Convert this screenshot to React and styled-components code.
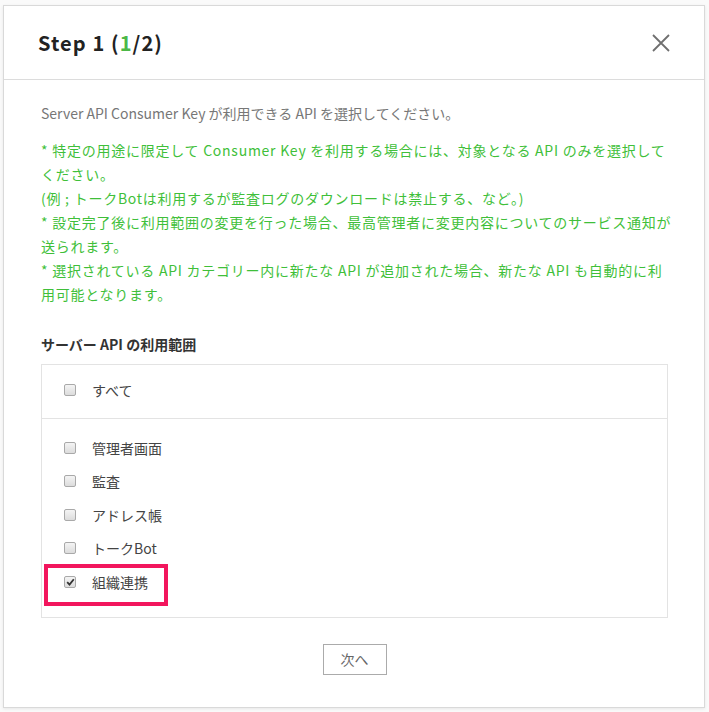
import React from "react";
import styled, { createGlobalStyle } from "styled-components";

const GlobalStyle = createGlobalStyle`
  html, body {
    margin: 0;
    padding: 0;
    background: #fff;
  }
  body {
    font-family: "Noto Sans CJK JP", "Noto Sans", sans-serif;
  }
`;

const Page = styled.div`
  width: 709px;
  height: 712px;
  padding: 5px 4px 4px 3px;
  box-sizing: border-box;
  background: #fafafa;
`;

const Modal = styled.div`
  height: 703px;
  box-sizing: border-box;
  background: #fff;
  border: 1px solid #d9d9d9;
  box-shadow: 0 1px 3px rgba(0, 0, 0, 0.08);
  display: flex;
  flex-direction: column;
`;

const Header = styled.div`
  height: 74px;
  box-sizing: border-box;
  padding: 0 32px 0 34px;
  display: flex;
  align-items: center;
  justify-content: space-between;
  border-bottom: 1px solid #dcdcdc;
`;

const Title = styled.h2`
  margin: 0;
  font-size: 20px;
  font-weight: 700;
  color: #222;
  letter-spacing: 1.1px;
`;

const Green = styled.span`
  color: #4cb847;
`;

const CloseButton = styled.button`
  border: 0;
  background: none;
  padding: 0;
  width: 22px;
  height: 22px;
  cursor: pointer;
  display: flex;
  align-items: center;
  justify-content: center;
`;

const Body = styled.div`
  padding: 21px 36px 0 37px;
  display: flex;
  flex-direction: column;
`;

const Lead = styled.p`
  margin: 0;
  font-size: 14px;
  line-height: 24px;
  color: #777;
`;

const Notes = styled.p`
  margin: 13px 0 0;
  font-size: 14px;
  line-height: 24px;
  letter-spacing: 0.75px;
  color: #3fbf3a;
  white-space: nowrap;
`;

const Line = styled.span`
  display: block;
`;

const Label = styled.h3`
  margin: 28px 0 10px;
  font-size: 14px;
  line-height: 20px;
  font-weight: 700;
  color: #333;
`;

const ScopeBox = styled.div`
  border: 1px solid #e3e3e3;
`;

const Section = styled.div`
  padding: ${(p) => p.$pad};
  border-top: ${(p) => (p.$divided ? "1px solid #e3e3e3" : "none")};
`;

const Item = styled.label`
  position: relative;
  display: flex;
  align-items: center;
  gap: 16px;
  height: ${(p) => p.$h}px;
  padding-left: 22px;
  font-size: 14px;
  color: #444;
  cursor: pointer;

  ${(p) =>
    p.$highlight &&
    `
    &::after {
      content: "";
      position: absolute;
      left: 2px;
      top: -1px;
      width: 124px;
      height: 42px;
      box-sizing: border-box;
      border: 4px solid #f2165d;
      pointer-events: none;
    }
  `}
`;

const Box = styled.span`
  width: 12px;
  height: 12px;
  box-sizing: border-box;
  border: 1px solid #a9a9a9;
  border-radius: 2px;
  background: linear-gradient(#f4f4f4, #dcdcdc);
  display: flex;
  align-items: center;
  justify-content: center;
  flex-shrink: 0;
`;

const Footer = styled.div`
  display: flex;
  justify-content: center;
  padding-top: 26px;
`;

const NextButton = styled.button`
  width: 64px;
  height: 31px;
  border: 1px solid #ababab;
  background: #fff;
  color: #666;
  font-family: "Noto Sans CJK JP", sans-serif;
  font-size: 14px;
  cursor: pointer;
`;

const notes = [
  "* 特定の用途に限定して Consumer Key を利用する場合には、対象となる API のみを選択して",
  "ください。",
  "(例 ; トークBotは利用するが監査ログのダウンロードは禁止する、など。)",
  "* 設定完了後に利用範囲の変更を行った場合、最高管理者に変更内容についてのサービス通知が",
  "送られます。",
  "* 選択されている API カテゴリー内に新たな API が追加された場合、新たな API も自動的に利",
  "用可能となります。",
];

const items = [
  { name: "管理者画面" },
  { name: "監査" },
  { name: "アドレス帳" },
  { name: "トークBot" },
  { name: "組織連携", checked: true },
];

const Check = ({ checked }) => (
  <Box>
    {checked && (
      <svg width="9" height="8" viewBox="0 0 9 8">
        <path d="M1.2 4.2 L3.5 6.6 L7.8 1.2" fill="none" stroke="#333" strokeWidth="1.8" />
      </svg>
    )}
  </Box>
);

export default function App() {
  return (
    <Page>
      <GlobalStyle />
      <Modal>
        <Header>
          <Title>
            Step 1 (<Green>1</Green>/2)
          </Title>
          <CloseButton aria-label="close">
            <svg width="20" height="20" viewBox="0 0 20 20">
              <path d="M2 2 L18 18 M18 2 L2 18" stroke="#6f6f6f" strokeWidth="1.8" />
            </svg>
          </CloseButton>
        </Header>
        <Body>
          <Lead>Server API Consumer Key が利用できる API を選択してください。</Lead>
          <Notes>
            {notes.map((n) => (
              <Line key={n}>{n}</Line>
            ))}
          </Notes>
          <Label>サーバー API の利用範囲</Label>
          <ScopeBox>
            <Section $pad="0 0 4px">
              <Item $h={49}>
                <Check />
                すべて
              </Item>
            </Section>
            <Section $divided $pad="12px 0 18px">
              {items.map((it) => (
                <Item key={it.name} $h={33.5} $highlight={it.checked}>
                  <Check checked={it.checked} />
                  {it.name}
                </Item>
              ))}
            </Section>
          </ScopeBox>
          <Footer>
            <NextButton>次へ</NextButton>
          </Footer>
        </Body>
      </Modal>
    </Page>
  );
}
